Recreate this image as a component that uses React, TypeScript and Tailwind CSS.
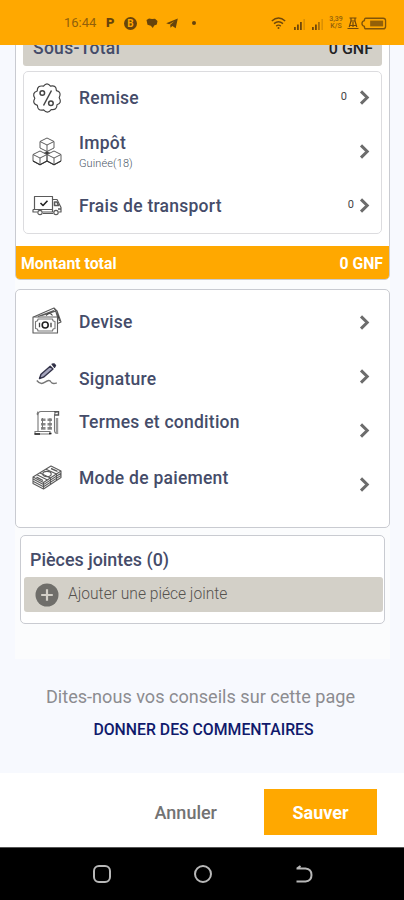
import type { ReactNode } from "react";

interface RowProps {
    icon: ReactNode;
    label: string;
    labelClass?: string;
    iconClass?: string;
    sub?: string;
    value?: string;
    valueClass?: string;
}

function Chevron() {
    return (
        <svg width="11" height="15" viewBox="0 0 11 15" className="shrink-0">
            <path d="M2 1.4 8.2 7.5 2 13.6" fill="none" stroke="#6c6c6c" strokeWidth="3" />
        </svg>
    );
}

function DiscountIcon() {
    return (
        <svg width="30" height="30" viewBox="0 0 30 30" fill="none" stroke="#444" strokeWidth="1.2">
            <path
                strokeLinejoin="round"
                d="M11.5 3.2Q15 -1.5 18.5 3.2 24.2 1.8 24.4 7.6 30 9 27.2 14.8 30.4 20 25 21.8 25 27.4 19.2 26.6 15.5 31.4 11.6 26.8 5.6 28.2 5.4 22.4 -.2 20.6 2.8 15.2 -.4 9.8 5.2 8 5.2 2 11.5 3.2Z"
            />
            <path d="M19.5 7.5 11.5 22.5" strokeWidth="1.5" />
            <circle cx="10.3" cy="10" r="2.3" strokeWidth="1.5" />
            <circle cx="18.9" cy="20.2" r="2.3" strokeWidth="1.5" />
        </svg>
    );
}

function BoxesIcon() {
    return (
        <svg width="30" height="29" viewBox="0 0 30 29" fill="none" stroke="#5c5c5c" strokeWidth="1" strokeLinejoin="round">
            <path d="M15 1 22 4.5V11L15 14.5 8 11V4.5ZM8 4.5 15 8 22 4.5M15 8V14.5" />
            <path d="M8 14 15 17.5V24L8 27.8 1 24V17.5ZM1 17.5 8 21 15 17.5M8 21V27.8" />
            <path d="M22 14 29 17.5V24L22 27.8 15 24V17.5ZM15 17.5 22 21 29 17.5M22 21V27.8" />
            <path d="M15 14.5 17.5 16 15 17.5 12.5 16Z" fill="#333" />
            <path d="M1 24 8 27.8 15 24 22 27.8 29 24" stroke="#333" strokeWidth="1.2" />
        </svg>
    );
}

function TruckIcon() {
    return (
        <svg width="30" height="21" viewBox="0 0 30 21" fill="none" stroke="#5a5a5a" strokeWidth="1.2" strokeLinejoin="round">
            <path d="M2.5 14V1.5H20.5V17H11M20.5 4.5H25L28 10.5 29 12.5V17H27M1 14.5V17H5M1 14.5H20.5" />
            <path d="M22.5 7H25L26.5 10.5H22.5ZM26 14H29" strokeWidth="1.6" />
            <circle cx="8" cy="17.5" r="2.2" />
            <circle cx="24" cy="17.5" r="2.2" />
            <path d="M11 18.5H21" />
            <path d="M8.5 8 11 10.5 15.5 5.8" stroke="#222" strokeWidth="1.6" />
        </svg>
    );
}

function MoneyIcon() {
    return (
        <svg width="30" height="27" viewBox="0 0 30 27" fill="none" stroke="#5a5a5a" strokeWidth="1.1" strokeLinejoin="round">
            <path d="M1.5 10 22 1 24 5 25.5 10M10 8.5 25 3.8 26.5 10M22 1 25 3.8 29 15 25.5 16.5M6 9.5 22 3.5" />
            <path d="M14 8.5Q18 4.5 20.5 8.5M26 8.5 27.5 14" stroke="#444" />
            <rect x="1" y="10" width="24.5" height="16" fill="#fff" />
            <path d="M3.5 14.5Q6 14.5 6 12H20.5Q20.5 14.5 23 14.5V21.5Q20.5 21.5 20.5 24H6Q6 21.5 3.5 21.5Z" stroke="#777" />
            <circle cx="13.2" cy="18" r="3" stroke="#222" strokeWidth="1.6" />
            <path d="M7.5 15.8V20.2M19 15.8V20.2" stroke="#444" strokeWidth="1.3" />
        </svg>
    );
}

function SignatureIcon() {
    return (
        <svg width="22" height="23" viewBox="0 0 22 23" fill="none" stroke="#34344a" strokeLinejoin="round">
            <path d="M3.5 15.5 5 11.2 14.2 3.2 17 6 7.5 14.2Z" strokeWidth="1.4" fill="#a5a5bd" />
            <path d="M16 1.2 18.2.8 19.6 2.4 18.5 4.4Z" fill="#222233" strokeWidth="1.2" />
            <path d="M.8 17.5Q4.5 22.3 9 19.2 13.5 16 15 19 16.5 21.5 20.8 19.8" strokeWidth="1.4" stroke="#777" />
        </svg>
    );
}

function TermsIcon() {
    return (
        <svg width="28" height="26" viewBox="0 0 28 26" fill="none" stroke="#777" strokeWidth="1.1">
            <path d="M5 21V5.5Q5 1.5 8 1.5H24Q21.5 2 21.5 5.5V20.5Q21.5 23.5 25 23.5M5 1.5Q3.5 3.5 5 5.5" />
            <path d="M21 1.8H25.5V5H21.5" stroke="#555" strokeWidth="1.4" />
            <path d="M2 21.5H17V24H2Z" stroke="#777" />
            <path d="M24 8V24" strokeWidth="2.4" stroke="#999" />
            <path d="M8 9.8H12.5M14.5 9.8H19M8 14.2H12.5M14.5 14.2H19M8 18.4H12.5M14.5 18.4H19" strokeWidth="2.6" stroke="#8a8a8a" />
            <path d="M9.5 8V19M17 8V19" stroke="#777" strokeWidth="1" />
            <path d="M1.5 24H7M16 23.5H18.5" stroke="#222" strokeWidth="1.6" />
        </svg>
    );
}

function CashStackIcon() {
    return (
        <svg width="30" height="25" viewBox="0 0 30 25" fill="none" stroke="#5c5c5c" strokeWidth="1.1" strokeLinejoin="round">
            <path d="M1 12 19 1 29 6 11.5 17.5ZM1 12V18.5L11.5 24 29 12.5V6M1 14 11.5 19.6 29 8.2M1 16.2 11.5 21.8 29 10.4M11.5 17.5V24" />
            <path d="M5 9.7 15.5 15M8 8 18.5 13V19.5M14 4.2 24.5 9V15.5" />
            <ellipse cx="15" cy="9" rx="4.2" ry="2.6" />
            <path d="M4.5 12.2 11 15.5M19 3.5 25.5 6.3" strokeWidth="1.4" />
        </svg>
    );
}

function Row({ icon, label, labelClass = "", iconClass = "", sub, value, valueClass = "" }: RowProps) {
    return (
        <div className="flex h-[54px] shrink-0 items-center">
            <div className={`flex w-[30px] shrink-0 justify-center ${iconClass}`}>{icon}</div>
            <div className={`ml-[17px] grow font-medium text-[17.5px] leading-5 tracking-[0.25px] text-[#454c69] ${labelClass}`}>
                {label}
                {sub && <p className="text-[11px] leading-[14px] mt-1 font-light tracking-[0.1px] text-gray-600">{sub}</p>}
            </div>
            {value && <span className={`text-[11px] text-[#444] ${valueClass}`}>{value}</span>}
            <Chevron />
        </div>
    );
}

function Signal({ weak = false }: { weak?: boolean }) {
    return (
        <svg width="12" height="12" viewBox="0 0 12 12" fill="#70480a">
            <rect x="0" y="9" width="1.8" height="3" />
            <rect x="3" y="6.5" width="1.8" height="5.5" />
            <rect x="6" y="4" width="1.8" height="8" opacity={weak ? 0.6 : 1} />
            <rect x="9.4" y="1" width="1.6" height="11" opacity="0.25" />
        </svg>
    );
}

function StatusBar() {
    return (
        <header className="flex h-[45px] shrink-0 items-center bg-[#ffa800] pl-16 pr-[17px] pt-px text-[#67440c]">
            <span className="w-[33px] text-[13px] whitespace-nowrap text-[#91600b]">16:44</span>
            <span className="ml-[9px] w-[9px] text-[13px] font-black">P</span>
            <span className="ml-[9px] flex size-[13px] items-center justify-center rounded-full bg-[#67440c] text-[10px] font-bold text-[#ffa800]">B</span>
            <svg className="ml-[9px]" width="12" height="11" viewBox="0 0 12 11" fill="#67440c">
                <path d="M.5 2 3 .5 6 1 9 .8 11.5 3 10.8 6.5 8.2 7.5 6.8 10 4.8 7.8 1.5 6.8Z" />
            </svg>
            <svg className="ml-2" width="12" height="11" viewBox="0 0 12 11" fill="#67440c">
                <path d="M.2 5.3 11.8.5 9.7 10.3 6.4 8 4.5 9.8 4.2 6.8 8.7 3 3.2 6.2Z" />
            </svg>
            <span className="ml-[14px] size-1 rounded-full bg-[#67440c]" />
            <div className="ml-auto flex items-center">
                <svg width="16" height="13" viewBox="0 0 16 13" fill="none" stroke="#70480a" strokeWidth="1.4">
                    <path d="M.8 4Q7.5-1.8 14.2 4M3 6.6Q7.5 2.8 12 6.6M5.2 9.1Q7.5 7.2 9.8 9.1" />
                    <circle cx="7.5" cy="11" r="1" fill="#70480a" stroke="none" />
                </svg>
                <span className="ml-[7px] mt-0.5"><Signal /></span>
                <span className="ml-[6px] mt-0.5"><Signal weak /></span>
                <span className="ml-[5px] w-[14px] text-center text-[7px] font-medium leading-[7px] whitespace-nowrap text-[#91600b]">3,39<br />K/S</span>
                <svg className="ml-[4px]" width="12" height="13" viewBox="0 0 12 13" fill="none" stroke="#70480a" strokeWidth="1.2">
                    <path d="M2.5 1H9.5M4 1V4L2.2 10M8 1V4L9.8 10M.5 11.5H11.5M3 8.5H9M4 4H8M6 5V10" />
                </svg>
                <svg className="ml-[2px]" width="26" height="13" viewBox="0 0 27 13" fill="none" stroke="#805409" strokeWidth="1.4">
                    <path d="M5 1H23Q25.5 1 25.5 3.5V9.5Q25.5 12 23 12H5Q3.5 12 3.5 9.5 1 9 1 6.5 1 4 3.5 3.5 3.5 1 5 1Z" />
                    <rect x="9.5" y="3.5" width="13.5" height="6" fill="#805409" stroke="none" opacity="0.85" />
                </svg>
            </div>
        </header>
    );
}

export default function App() {
    return (
        <div className="flex h-[900px] w-[404px] flex-col overflow-hidden bg-[#f7f9fe] font-[Roboto,'Liberation_Sans',sans-serif]">
            <StatusBar />
            <main className="flex h-[728px] shrink-0 flex-col overflow-hidden">
                <div className="ml-[15px] mr-[14px] shrink-0 bg-[#fbfcfd] pb-[35px]">
                    <section className="-mt-[20px] overflow-hidden rounded-[5px] border border-[#c9cbd1] bg-white">
                        <div className="mx-[7px] flex h-[40px] items-center justify-between rounded-[3px] bg-[#d3d0c8] pl-[10px] pr-[9px] pt-[5px] text-[17.5px]">
                            <span className="font-medium tracking-[0.3px] text-[#454c69]">Sous-Total</span>
                            <span className="text-[16px] font-medium text-[#222]">0 GNF</span>
                        </div>
                        <div className="mx-[7px] mt-[5px] flex h-[163px] flex-col justify-center rounded-[5px] border border-[#dcdcdf] pb-[2px] pl-2 pr-[11px]">
                            <Row icon={<DiscountIcon />} label="Remise" value="0" valueClass="mr-[12px]" />
                            <Row icon={<BoxesIcon />} label="Impôt" labelClass="mt-[1px]" sub="Guinée(18)" />
                            <Row icon={<TruckIcon />} label="Frais de transport" value="0" valueClass="mr-[5px]" />
                        </div>
                        <div className="-mx-px -mb-px mt-3 flex h-[34px] items-center justify-between bg-[#ffa800] pl-[6px] pr-[7px] pt-px text-[15.8px] font-bold text-white">
                            <span>Montant total</span>
                            <span>0 GNF</span>
                        </div>
                    </section>

                    <section className="mt-[9px] h-[239px] rounded-[5px] border border-[#c9cbd1] bg-white pl-4 pr-[19px] pt-[5px]">
                        <Row icon={<MoneyIcon />} iconClass="-mt-[4px]" label="Devise" />
                        <Row icon={<SignatureIcon />} iconClass="-mt-[4px]" label="Signature" labelClass="mt-[6px]" />
                        <Row icon={<TermsIcon />} iconClass="-mt-[15px]" label="Termes et condition" labelClass="-mt-[16px]" />
                        <Row icon={<CashStackIcon />} iconClass="-mt-[13px]" label="Mode de paiement" labelClass="-mt-[12px]" />
                    </section>

                    <section className="mx-[5px] mt-[7px] h-[89px] rounded-[5px] border border-[#c9cbd1] bg-white pl-[3px] pr-px">
                        <h2 className="ml-[6px] pt-[12px] text-[17.9px] font-medium leading-6 text-[#454c69]">Pièces jointes (0)</h2>
                        <button className="mt-[5px] flex h-[35px] w-full items-center rounded-[3px] bg-[#d3d0c8] pl-[11px] pt-px text-[15.6px] font-light text-[#55524e]">
                            <svg width="24" height="24" viewBox="0 0 24 24" className="mr-[9px]">
                                <circle cx="12" cy="12" r="11.5" fill="#6f6e6a" />
                                <path d="M12 6.2V17.8M6.2 12H17.8" stroke="#d3d0c8" strokeWidth="2.2" />
                            </svg>
                            Ajouter une piéce jointe
                        </button>
                    </section>
                </div>

                <div className="flex flex-col items-center pt-[26px]">
                    <p className="-ml-[3px] text-[18.1px] leading-6 text-[#8c8c90]">Dites-nous vos conseils sur cette page</p>
                    <a className="ml-[3px] mt-[9px] text-[15.8px] font-medium leading-6 text-[#101a6c]">DONNER DES COMMENTAIRES</a>
                </div>
            </main>

            <footer className="flex h-[74px] shrink-0 items-center justify-end bg-white pr-[27px] pt-[4px]">
                <button className="mr-[47px] text-[18px] font-medium text-[#737373]">Annuler</button>
                <button className="h-[46px] w-[113px] bg-[#ffa800] text-[18px] font-bold text-white">Sauver</button>
            </footer>

            <nav className="flex h-[53px] shrink-0 items-center justify-center gap-[81px] border-t border-[#555] bg-black pl-px">
                <svg width="20" height="20" viewBox="0 0 20 20" fill="none" stroke="#b8b8b8" strokeWidth="2">
                    <rect x="2" y="2" width="16" height="16" rx="5" />
                </svg>
                <svg width="20" height="20" viewBox="0 0 20 20" fill="none" stroke="#b8b8b8" strokeWidth="2">
                    <circle cx="10" cy="10" r="8" />
                </svg>
                <svg width="20" height="20" viewBox="0 0 20 20" fill="none" stroke="#b8b8b8" strokeWidth="2">
                    <path d="M2.5 4.5H11.5Q17.5 5 17.5 11 17.5 17 11.5 17.5H2.5M6.5 2 3 4.5" />
                </svg>
            </nav>
        </div>
    );
}
